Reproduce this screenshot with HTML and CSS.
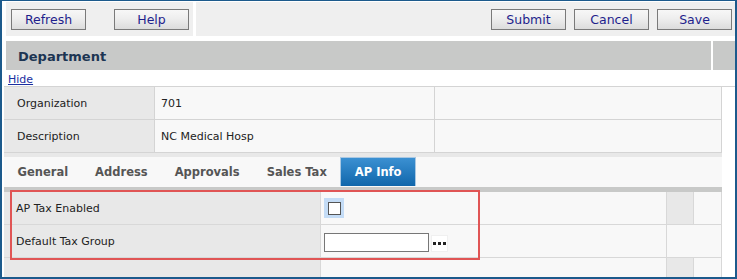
FILE: index.html
```html
<!DOCTYPE html>
<html>
<head>
<meta charset="utf-8">
<link rel="stylesheet" href="styles.css">
</head>
<body>
<div class="frame">
  <div class="toolbar">
    <div class="panel panel-left">
      <button class="btn">Refresh</button>
      <button class="btn">Help</button>
    </div>
    <div class="panel panel-right">
      <button class="btn">Submit</button>
      <button class="btn">Cancel</button>
      <button class="btn">Save</button>
    </div>
  </div>
  <div class="header">
    <div class="header-main">Department</div>
    <div class="header-side"></div>
  </div>
  <div class="hide-row"><a class="hide-link" href="#">Hide</a></div>
  <div class="info">
    <div class="cell label">Organization</div>
    <div class="cell value">701</div>
    <div class="cell value"></div>
    <div class="cell label">Description</div>
    <div class="cell value">NC Medical Hosp</div>
    <div class="cell value"></div>
  </div>
  <div class="strip"></div>
  <div class="tabs">
    <div class="tab">General</div>
    <div class="tab">Address</div>
    <div class="tab">Approvals</div>
    <div class="tab">Sales Tax</div>
    <div class="tab active">AP Info</div>
  </div>
  <div class="tab-sep"></div>
  <div class="form">
    <div class="fcell flabel">AP Tax Enabled</div>
    <div class="fcell fvalue">
      <span class="check-wrap"><span class="check"></span></span>
    </div>
    <div class="fcell fgray"></div>
    <div class="fcell fvalue"></div>

    <div class="fcell flabel">Default Tax Group</div>
    <div class="fcell fvalue">
      <span class="text-input"></span>
      <span class="lookup">
        <svg width="13" height="3" viewBox="0 0 13 3"><rect x="0" y="0" width="3" height="3" fill="#222"/><rect x="5" y="0" width="3" height="3" fill="#222"/><rect x="10" y="0" width="3" height="3" fill="#222"/></svg>
      </span>
    </div>
    <div class="fcell fvalue span2"></div>

    <div class="fcell flabel"></div>
    <div class="fcell fvalue"></div>
    <div class="fcell fgray"></div>
    <div class="fcell fvalue"></div>
  </div>
  <div class="highlight"></div>
</div>
</body>
</html>
```
FILE: styles.css
```css
html, body {
  margin: 0;
  padding: 0;
  background: #ffffff;
}

body {
  width: 737px;
  height: 279px;
  overflow: hidden;
  font-family: "DejaVu Sans", Verdana, sans-serif;
  font-size: 11px;
  color: #222;
}

.frame {
  position: relative;
  box-sizing: border-box;
  width: 737px;
  height: 279px;
  border-style: solid;
  border-color: #1c5a8c;
  border-width: 1px 2px 2px 2px;
  background: #fff;
  overflow: hidden;
}

/* toolbar */
.toolbar {
  display: flex;
  gap: 3px;
  margin-top: 1px;
  height: 34px;
}

.panel {
  display: flex;
  align-items: flex-start;
  background: #efefef;
  box-sizing: border-box;
  padding-top: 7px;
}

.panel-left {
  margin-left: 4px;
  width: 187px;
  padding-left: 5px;
  gap: 28px;
}

.panel-right {
  flex: 1;
  justify-content: flex-end;
  padding-right: 3px;
  gap: 8px;
}

.btn {
  box-sizing: border-box;
  width: 75px;
  height: 21px;
  margin: 0;
  padding: 0;
  border: 1px solid #7a7a7a;
  border-radius: 0;
  background: linear-gradient(#f7f7f7 0%, #eeeeee 45%, #dcdcdc 100%);
  font-family: "DejaVu Sans", Verdana, sans-serif;
  font-size: 12.5px;
  color: #1e1e8c;
  line-height: 19px;
}

/* header */
.header {
  display: flex;
  gap: 2px;
  margin-top: 5px;
  height: 29px;
}

.header-main {
  flex: 1;
  margin-left: 4px;
  background: #c8c9c8;
  font-size: 13px;
  font-weight: bold;
  color: #1c3553;
  line-height: 31px;
  padding-left: 12px;
}

.header-side {
  width: 22px;
  background: #c8c9c8;
}

.hide-row {
  height: 16px;
  padding-left: 6px;
  line-height: 20px;
}

.hide-link {
  font-size: 11px;
  color: #1b2fa0;
  text-decoration: underline;
}

/* info table */
.info {
  display: grid;
  grid-template-columns: 151px 280px 287px;
  grid-auto-rows: 33px;
  margin-left: 2px;
  border-top: 1px solid #d4d4d4;
}

.cell {
  box-sizing: border-box;
  border-right: 1px solid #d4d4d4;
  border-bottom: 1px solid #d4d4d4;
  display: flex;
  align-items: center;
  padding-top: 1px;
  font-size: 11px;
  color: #222;
}

.cell.label {
  background: #e8e8e8;
  padding-left: 13px;
}

.cell.value {
  background: #f8f8f8;
  padding-left: 6px;
}

.strip {
  margin-left: 2px;
  width: 718px;
  height: 4px;
  background: #e8e8e8;
}

/* tabs */
.tabs {
  display: flex;
  margin-left: 2px;
  width: 718px;
  height: 30px;
  background: #f8f8f8;
}

.tab {
  box-sizing: border-box;
  padding: 0 13.5px;
  height: 30px;
  line-height: 31px;
  font-size: 11.5px;
  font-weight: bold;
  color: #555;
}

.tab.active {
  height: 29px;
  line-height: 29px;
  border: 1px solid #a9c8e3;
  border-bottom: none;
  background: linear-gradient(#3b90d2, #1066ab);
  color: #fff;
}

.tab-sep {
  margin-left: 2px;
  width: 718px;
  height: 5px;
  background: #c8c9c8;
}

/* form */
.form {
  display: grid;
  grid-template-columns: 317px 346px 27px 28px;
  grid-auto-rows: 33px;
  margin-left: 2px;
}

.fcell {
  box-sizing: border-box;
  border-right: 1px solid #d8d8d8;
  border-bottom: 1px solid #d8d8d8;
  display: flex;
  align-items: center;
  font-size: 11px;
  color: #222;
}

.flabel {
  background: #e8e8e8;
  padding-left: 12px;
}

.fvalue {
  background: #f8f8f8;
  padding-left: 3px;
}

.fgray {
  background: #e8e8e8;
}

.span2 {
  grid-column: span 2;
}

.check-wrap {
  display: flex;
  align-items: center;
  justify-content: center;
  width: 20px;
  height: 20px;
  background: #c4dcf6;
}

.check {
  box-sizing: border-box;
  width: 13px;
  height: 13px;
  border: 1px solid #555;
  background: #fff;
}

.text-input {
  box-sizing: border-box;
  width: 105px;
  height: 19px;
  border: 1px solid #777;
  background: #fff;
  margin-top: 2px;
}

.lookup {
  box-sizing: border-box;
  display: flex;
  align-items: center;
  justify-content: center;
  width: 17px;
  height: 17px;
  margin-left: 2px;
  margin-top: 5px;
  background: #fff;
  border: 1px solid #f0f0f0;
}

/* annotation overlay */
.highlight {
  position: absolute;
  left: 8px;
  top: 189px;
  width: 470px;
  height: 70px;
  box-sizing: border-box;
  border: 2px solid #e05555;
  pointer-events: none;
}
```
